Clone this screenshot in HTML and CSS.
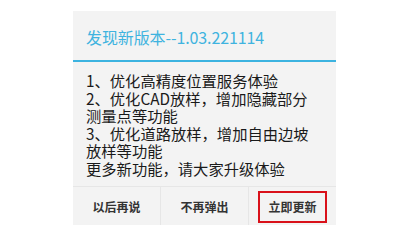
FILE: index.html
```html
<!DOCTYPE html>
<html lang="zh">
<head>
<meta charset="utf-8">
<link rel="stylesheet" href="styles.css">
</head>
<body>
<div class="dialog">
  <div class="title">发现新版本--1.03.221114</div>
  <div class="content">
    <div class="line">1、优化高精度位置服务体验</div>
    <div class="line">2、优化CAD放样，增加隐藏部分</div>
    <div class="line">测量点等功能</div>
    <div class="line">3、优化道路放样，增加自由边坡</div>
    <div class="line">放样等功能</div>
    <div class="line">更多新功能，请大家升级体验</div>
  </div>
  <div class="buttons">
    <div class="btn">以后再说</div>
    <div class="btn">不再弹出</div>
    <div class="btn btn-marked">立即更新<span class="mark"></span></div>
  </div>
</div>
</body>
</html>
```
FILE: styles.css
```css
html, body {
  margin: 0;
  padding: 0;
  background: #ffffff;
}
body {
  font-family: "Noto Sans CJK SC", "Noto Sans", sans-serif;
}
.dialog {
  margin: 11px 0 0 73px;
  width: 263px;
  background: #f3f3f3;
}
.title {
  height: 51px;
  box-sizing: border-box;
  padding: 2px 0 0 13px;
  display: flex;
  align-items: center;
  font-size: 16px;
  color: #3fb3df;
  border-bottom: 2px solid #3cb3e0;
  letter-spacing: -0.1px;
}
.content {
  padding: 10px 8px 9px 13px;
  font-size: 15.3px;
  line-height: 17.5px;
  color: #1a1a1a;
}
.line {
  height: 17.5px;
  white-space: nowrap;
}
.buttons {
  display: flex;
  border-top: 1px solid #e6e6e6;
  height: 38px;
}
.btn {
  flex: 1;
  display: flex;
  align-items: center;
  justify-content: center;
  font-size: 12px;
  font-weight: bold;
  color: #333333;
  position: relative;
  padding-top: 1px;
}
.btn + .btn {
  border-left: 1px solid #e6e6e6;
}
.mark {
  position: absolute;
  left: 9px;
  right: 9px;
  top: 4px;
  bottom: 2px;
  border: 2px solid #d9111a;
}
```
